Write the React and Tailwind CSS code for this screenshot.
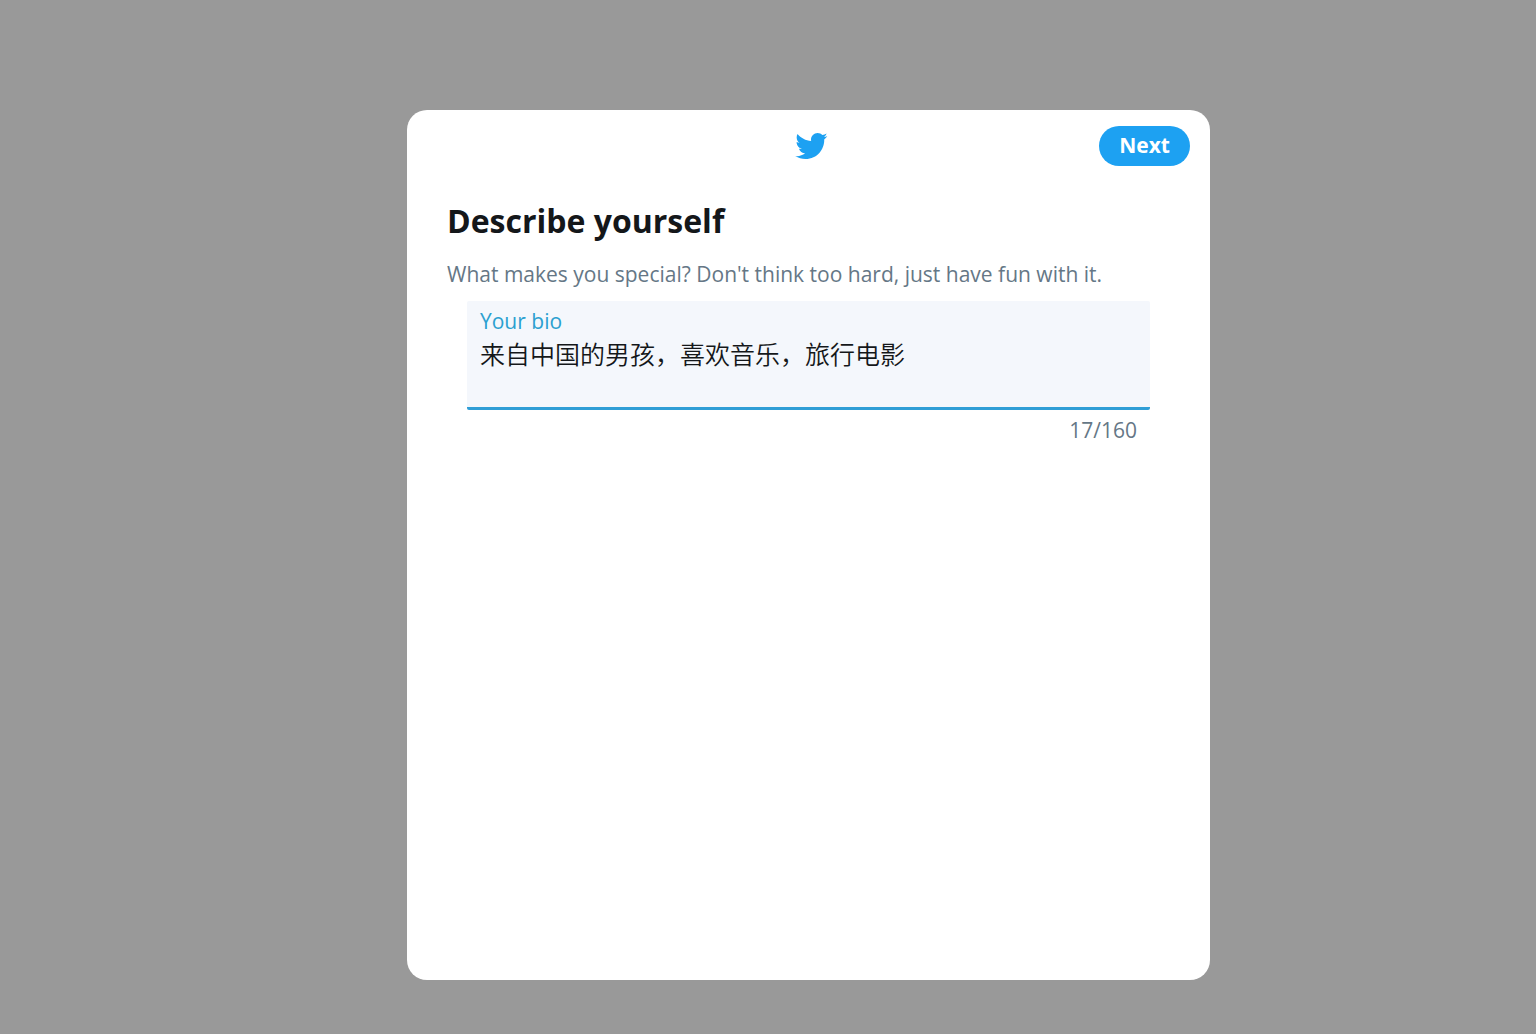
import { useState } from 'react';

const MAX_BIO = 160;

export default function App() {
  const [bio, setBio] = useState('来自中国的男孩，喜欢音乐，旅行电影');

  return (
    <div className="flex min-h-screen justify-center bg-[#999999] pt-[110px] pb-[54px] pl-[81px] font-['Open_Sans','Noto_Sans_CJK_SC',sans-serif]">
      <main className="flex w-full max-w-[803px] flex-col rounded-[20px] bg-white">
        <header className="grid grid-cols-3 items-center pt-4 pr-5 pl-6">
          <TwitterLogo className="col-start-2 h-[34px] w-[34px] justify-self-center text-[#1da1f2]" />
          <button
            type="button"
            className="h-10 justify-self-end rounded-full bg-[#1da1f2] px-5 text-[21px] font-bold text-white"
          >
            Next
          </button>
        </header>

        <section className="px-10 pt-8">
          <h1 className="text-[32px] leading-[46px] font-bold text-[#14171a]">Describe yourself</h1>
          <p className="mt-[14px] text-[21px] leading-8 text-[#657786]">
            What makes you special? Don't think too hard, just have fun with it.
          </p>
        </section>

        <BioField value={bio} onChange={setBio} />
      </main>
    </div>
  );
}

function BioField({ value, onChange }) {
  return (
    <div className="px-[60px] pt-[11px]">
      <div className="rounded-xs border-b-3 border-[#2f9ed6] bg-[#f4f7fc] px-[13px] pt-1">
        <label htmlFor="bio" className="block text-[21px] leading-8 text-[#2ba0d0]">
          Your bio
        </label>
        <textarea
          id="bio"
          rows={2}
          maxLength={MAX_BIO}
          value={value}
          onChange={(e) => onChange(e.target.value)}
          className="block w-full resize-none bg-transparent text-[25px] leading-[35px] font-[350] text-[#14171a] outline-none"
        />
      </div>
      <p className="pt-1 pr-[13px] text-right text-[21px] leading-8 text-[#657786]">
        {value.length}/{MAX_BIO}
      </p>
    </div>
  );
}

function TwitterLogo({ className }) {
  return (
    <svg viewBox="0 0 24 24" fill="currentColor" className={className} role="img" aria-label="Twitter">
      <path d="M23.643 4.937c-.835.37-1.732.62-2.675.733.962-.576 1.7-1.49 2.048-2.578-.9.534-1.897.922-2.958 1.13-.85-.904-2.06-1.47-3.4-1.47-2.572 0-4.658 2.086-4.658 4.66 0 .364.042.718.12 1.06-3.873-.195-7.304-2.05-9.602-4.868-.4.69-.63 1.49-.63 2.342 0 1.616.823 3.043 2.072 3.878-.764-.025-1.482-.234-2.11-.583v.06c0 2.257 1.605 4.14 3.737 4.568-.392.106-.803.162-1.227.162-.3 0-.593-.028-.877-.082.593 1.85 2.313 3.198 4.352 3.234-1.595 1.25-3.604 1.995-5.786 1.995-.376 0-.747-.022-1.112-.065 2.062 1.323 4.51 2.093 7.14 2.093 8.57 0 13.255-7.098 13.255-13.254 0-.2-.005-.402-.014-.602.91-.658 1.7-1.477 2.323-2.41z" />
    </svg>
  );
}
